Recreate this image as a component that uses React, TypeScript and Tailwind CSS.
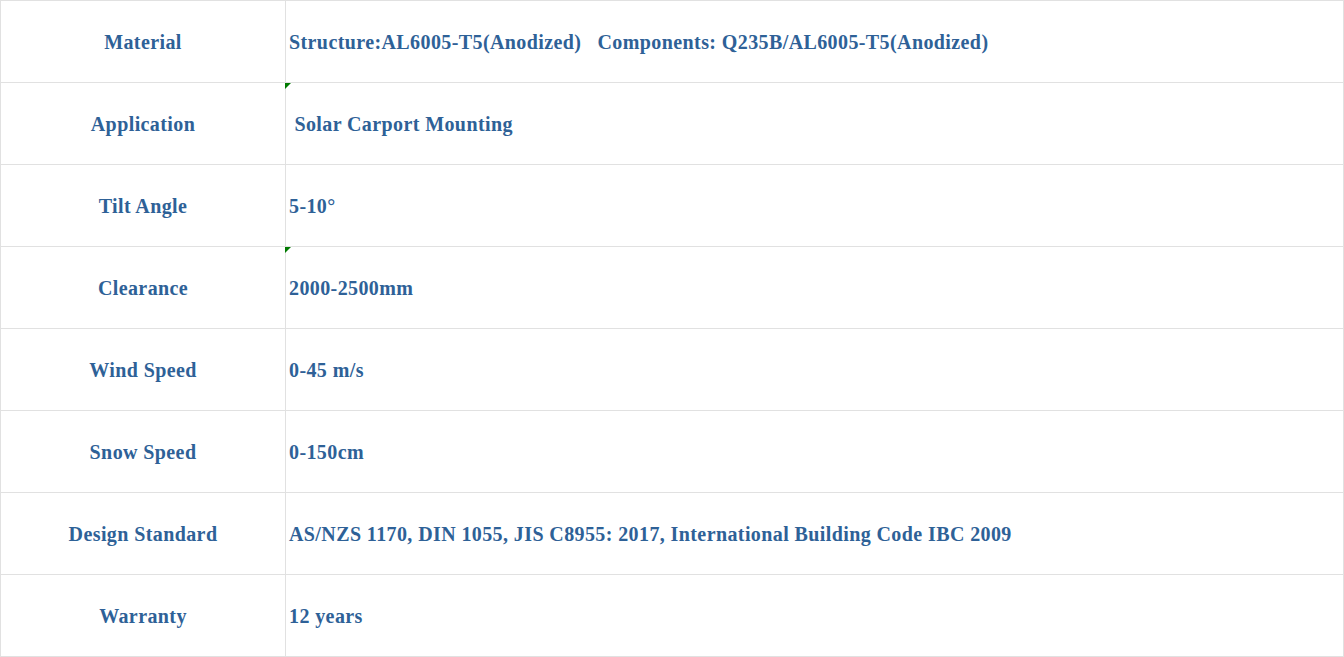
const rows: { label: string; value: string; flag?: boolean }[] = [
  { label: "Material", value: "Structure:AL6005-T5(Anodized)   Components: Q235B/AL6005-T5(Anodized)" },
  { label: "Application", value: " Solar Carport Mounting", flag: true },
  { label: "Tilt Angle", value: "5-10°" },
  { label: "Clearance", value: "2000-2500mm", flag: true },
  { label: "Wind Speed", value: "0-45 m/s" },
  { label: "Snow Speed", value: "0-150cm" },
  { label: "Design Standard", value: "AS/NZS 1170, DIN 1055, JIS C8955: 2017, International Building Code IBC 2009" },
  { label: "Warranty", value: "12 years" },
];

export default function App() {
  return (
    <div className="w-[1344px] bg-white font-['Liberation_Serif','Times_New_Roman',serif] text-[20px] font-bold tracking-[0.4px] text-[#2e6197]">
      <div className="border-t border-l border-[#e1e1e1]">
        {rows.map((r) => (
          <div key={r.label} className="flex h-[82px]">
            <div className="flex w-[285px] items-center justify-center border-r border-b border-[#e1e1e1] pt-[1px]">
              {r.label}
            </div>
            <div className="relative flex flex-1 items-center whitespace-pre border-r border-b border-[#e1e1e1] pl-[3px] pt-[1px]">
              {r.flag && (
                <span className="absolute -left-px top-0 h-0 w-0 border-t-[6px] border-r-[6px] border-t-[#007a00] border-r-transparent" />
              )}
              {r.value}
            </div>
          </div>
        ))}
      </div>
    </div>
  );
}
